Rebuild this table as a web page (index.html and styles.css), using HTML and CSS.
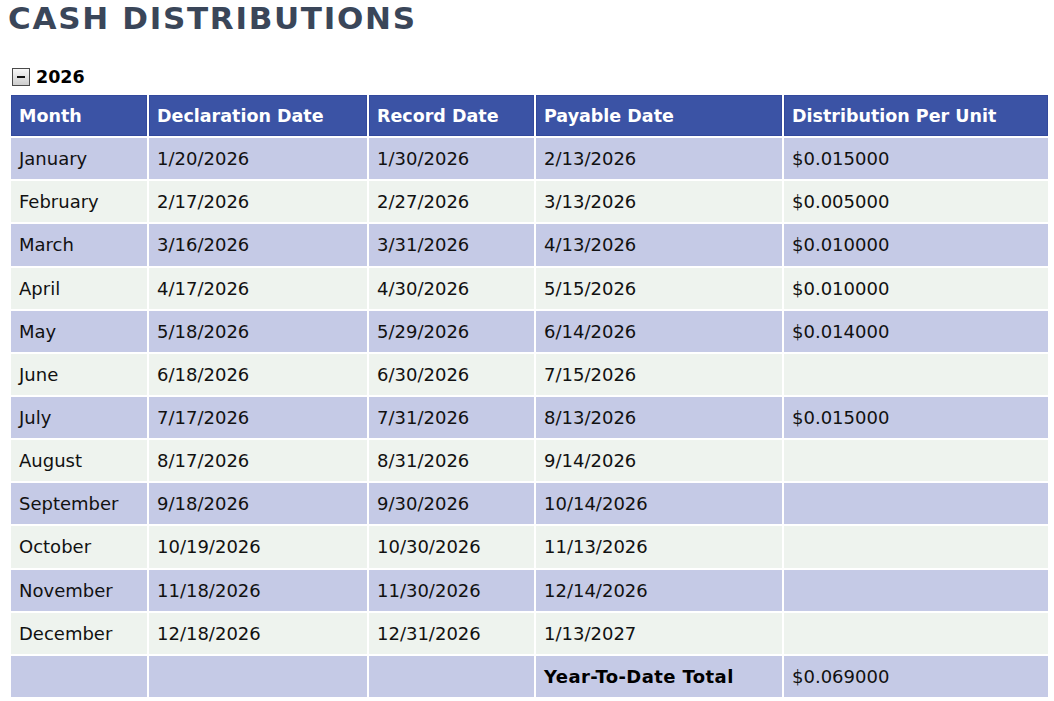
FILE: index.html
```html
<!DOCTYPE html>
<html>
<head>
<meta charset="utf-8">
<link rel="stylesheet" href="styles.css">
</head>
<body>
<h1 class="title">CASH DISTRIBUTIONS</h1>
<div class="year">
  <span class="toggle"><span class="minus"></span></span>
  <span class="year-label">2026</span>
</div>
<table class="dist">
  <colgroup>
    <col class="c1"><col class="c2"><col class="c3"><col class="c4"><col class="c5">
  </colgroup>
  <thead>
    <tr><th>Month</th><th>Declaration Date</th><th>Record Date</th><th>Payable Date</th><th>Distribution Per Unit</th></tr>
  </thead>
  <tbody>
    <tr class="odd"><td>January</td><td>1/20/2026</td><td>1/30/2026</td><td>2/13/2026</td><td>$0.015000</td></tr>
    <tr class="even"><td>February</td><td>2/17/2026</td><td>2/27/2026</td><td>3/13/2026</td><td>$0.005000</td></tr>
    <tr class="odd"><td>March</td><td>3/16/2026</td><td>3/31/2026</td><td>4/13/2026</td><td>$0.010000</td></tr>
    <tr class="even"><td>April</td><td>4/17/2026</td><td>4/30/2026</td><td>5/15/2026</td><td>$0.010000</td></tr>
    <tr class="odd"><td>May</td><td>5/18/2026</td><td>5/29/2026</td><td>6/14/2026</td><td>$0.014000</td></tr>
    <tr class="even"><td>June</td><td>6/18/2026</td><td>6/30/2026</td><td>7/15/2026</td><td></td></tr>
    <tr class="odd"><td>July</td><td>7/17/2026</td><td>7/31/2026</td><td>8/13/2026</td><td>$0.015000</td></tr>
    <tr class="even"><td>August</td><td>8/17/2026</td><td>8/31/2026</td><td>9/14/2026</td><td></td></tr>
    <tr class="odd"><td>September</td><td>9/18/2026</td><td>9/30/2026</td><td>10/14/2026</td><td></td></tr>
    <tr class="even"><td>October</td><td>10/19/2026</td><td>10/30/2026</td><td>11/13/2026</td><td></td></tr>
    <tr class="odd"><td>November</td><td>11/18/2026</td><td>11/30/2026</td><td>12/14/2026</td><td></td></tr>
    <tr class="even"><td>December</td><td>12/18/2026</td><td>12/31/2026</td><td>1/13/2027</td><td></td></tr>
    <tr class="odd total"><td></td><td></td><td></td><td class="total-label">Year-To-Date Total</td><td>$0.069000</td></tr>
  </tbody>
</table>
</body>
</html>
```

FILE: styles.css
```css
html, body {
  background: #ffffff;
}
body {
  margin: 0 0 0 8px;
  font-family: "DejaVu Sans", Verdana, sans-serif;
  color: #111111;
}
.title {
  margin: 0;
  font-size: 31px;
  line-height: 36px;
  font-weight: bold;
  color: #3a4659;
  letter-spacing: 1.7px;
}
.year {
  margin-top: 32px;
  margin-left: 4px;
  height: 18px;
  display: flex;
  align-items: center;
  gap: 6px;
}
.toggle {
  flex: none;
  box-sizing: border-box;
  width: 18px;
  height: 18px;
  border: 1px solid #4a4a4a;
  background: linear-gradient(#f8f8f8, #cdcdcd);
  display: flex;
  align-items: center;
  justify-content: center;
}
.minus {
  width: 8px;
  height: 2px;
  background: #111111;
}
.year-label {
  font-size: 17.5px;
  line-height: 17px;
  font-weight: bold;
  color: #000000;
  margin-top: 1px;
}
.dist {
  margin-top: 7px;
  margin-left: 1px;
  border-collapse: separate;
  border-spacing: 2px;
  table-layout: fixed;
  width: 1041px;
}
.c1 { width: 136px; }
.c2 { width: 218px; }
.c3 { width: 165px; }
.c4 { width: 246px; }
.c5 { width: 264px; }
.dist th,
.dist td {
  height: 41.15px;
  padding: 0 0 0 8px;
  text-align: left;
  vertical-align: middle;
  white-space: nowrap;
  box-sizing: border-box;
}
.dist th {
  background: #3b53a5;
  color: #ffffff;
  font-size: 17.5px;
  font-weight: bold;
  padding-left: 7px;
  border: 1px solid #33499c;
}
.dist td {
  font-size: 18px;
  color: #111111;
}
.odd td { background: #c5cae6; }
.even td { background: #eef3ee; }
.dist .total-label {
  font-weight: bold;
  font-size: 18px;
  letter-spacing: 0.4px;
  color: #000000;
}
```
